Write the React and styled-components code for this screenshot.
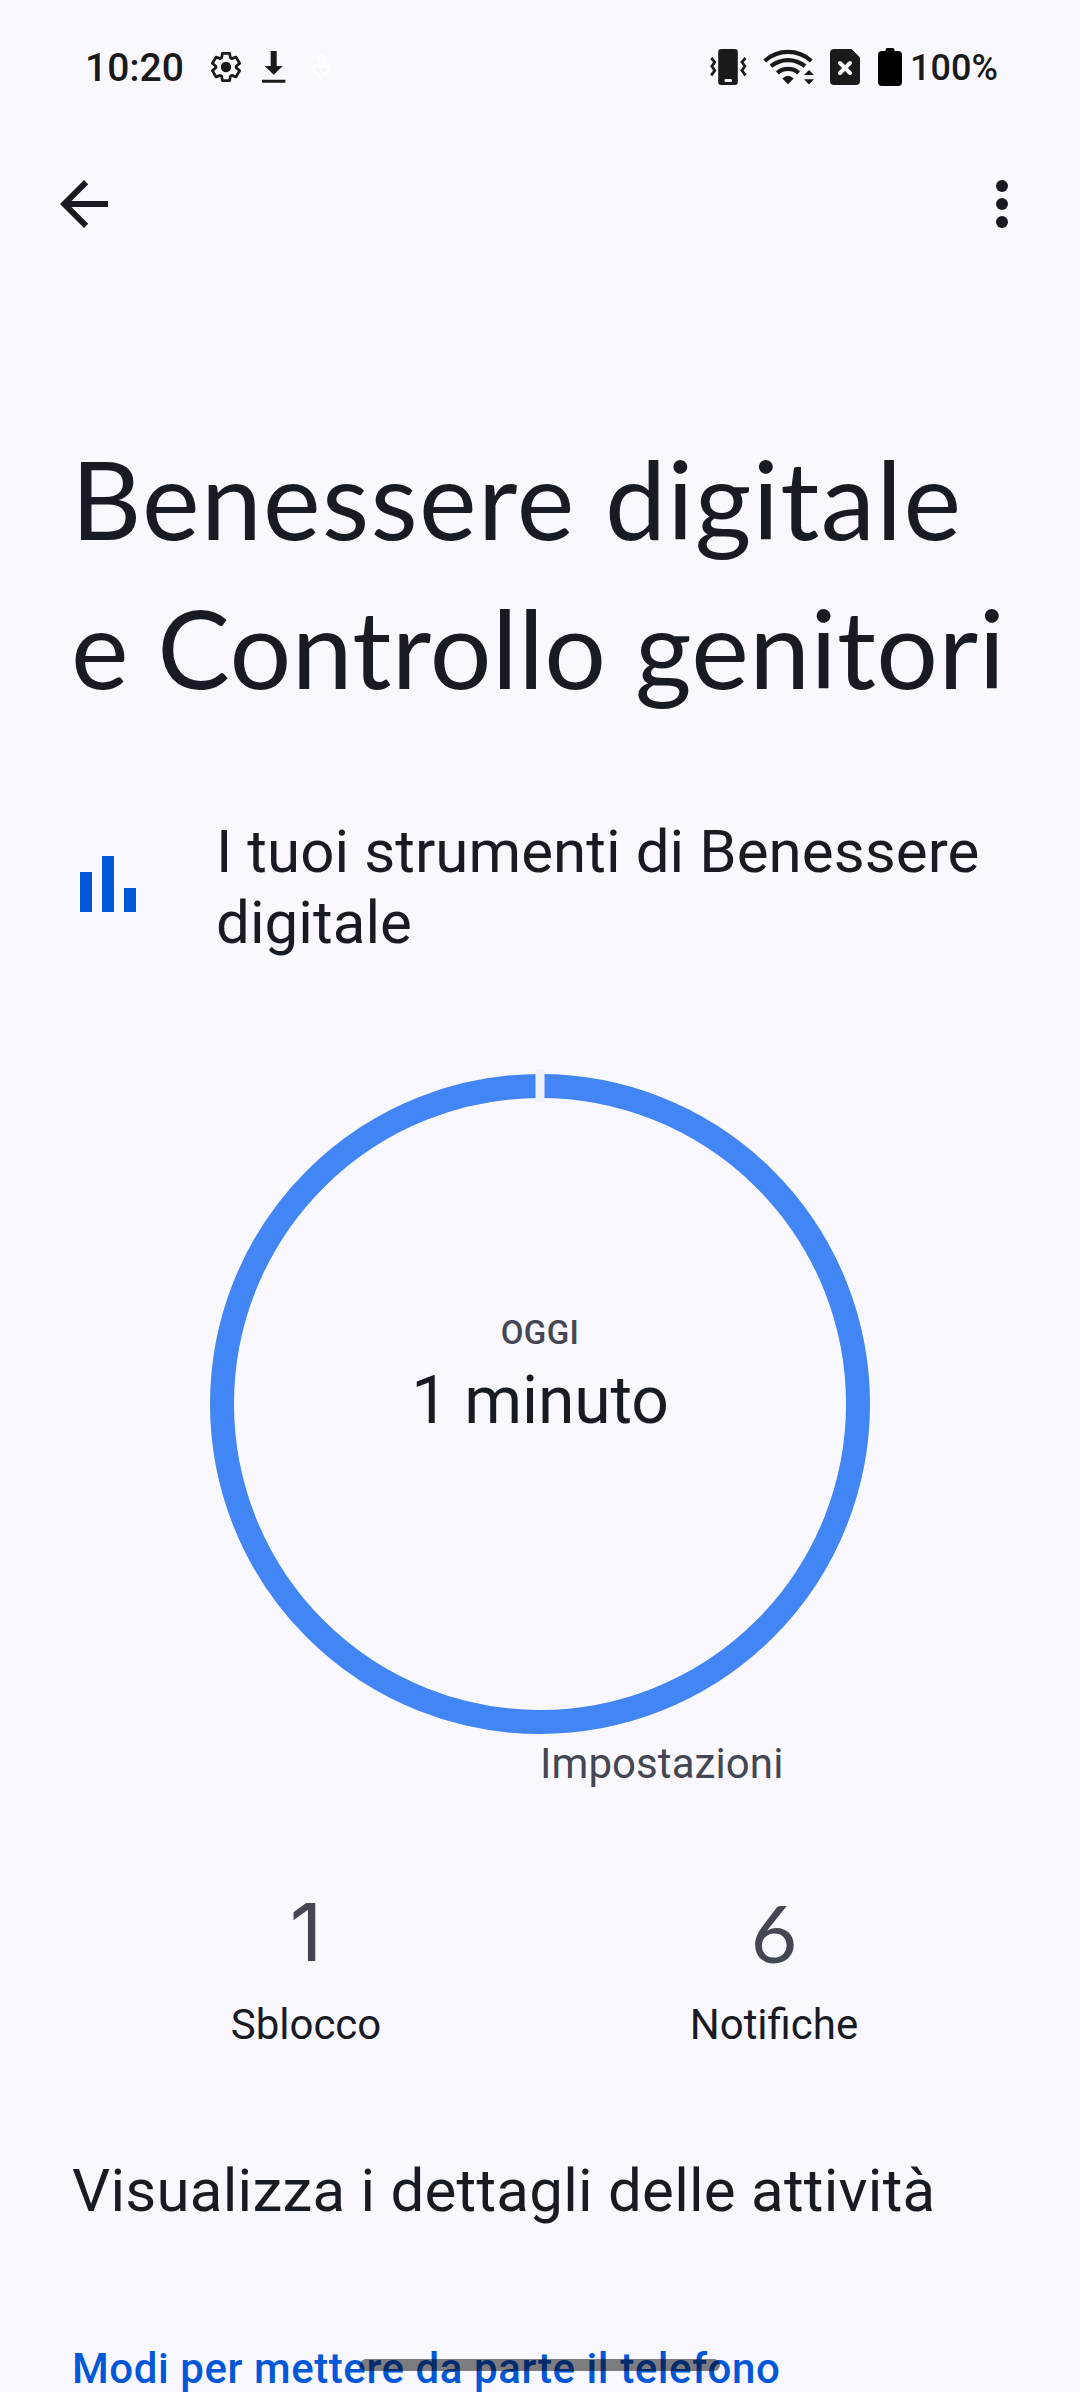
import React from "react";
import styled, { createGlobalStyle } from "styled-components";

const GlobalStyle = createGlobalStyle`
  * {
    box-sizing: border-box;
  }
  body {
    margin: 0;
    background: #faf8ff;
    font-family: Roboto, "Liberation Sans", sans-serif;
    color: #191b24;
  }
`;

const Screen = styled.div`
  position: relative;
  width: 1080px;
  height: 2392px;
  overflow: hidden;
  background: #faf8ff;
`;

const StatusBar = styled.header`
  display: flex;
  align-items: center;
  justify-content: space-between;
  height: 134px;
  padding: 0 82px 0 85px;
  color: #1a1a1a;
`;

const StatusGroup = styled.div`
  display: flex;
  align-items: center;
`;

const StatusIcon = styled.span`
  flex: none;
  margin-left: ${(p) => p.$before}px;

  svg {
    display: block;
  }
`;

const Clock = styled.span`
  width: 101px;
  padding-top: 1px;
  font-size: 39px;
  font-weight: 500;
  line-height: 46px;
`;

const Battery = styled.span`
  margin-left: 8px;
  padding-top: 2px;
  font-size: 36px;
  font-weight: 500;
  line-height: 42px;
`;

const AppBar = styled.nav`
  display: flex;
  align-items: center;
  justify-content: space-between;
  height: 140px;
  padding: 0 42px 0 48px;
`;

const IconButton = styled.button`
  width: 72px;
  height: 72px;
  padding: 0;
  border: 0;
  background: transparent;
  color: inherit;

  svg {
    display: block;
  }
`;

const Title = styled.h1`
  margin: 149px 0 0;
  padding-left: 71px;
  font-family: Lato, "Liberation Sans", sans-serif;
  font-size: 109px;
  font-weight: 400;
  line-height: 149px;
  white-space: nowrap;
`;

const TitleLine = styled.span`
  display: block;
  letter-spacing: ${(p) => p.$spacing}px;
`;

const ToolsRow = styled.section`
  display: flex;
  align-items: flex-start;
  gap: 80px;
  margin-top: 95px;
  padding: 0 72px 0 80px;

  svg {
    flex: none;
    margin-top: 40px;
  }
`;

const ToolsText = styled.h2`
  margin: 0;
  font-size: 60px;
  font-weight: 400;
  line-height: 71px;
  letter-spacing: 0.08px;
`;

const Usage = styled.section`
  position: relative;
  width: 660px;
  height: 660px;
  margin: 116px auto 0;
  padding-top: 239px;
  text-align: center;
`;

const Ring = styled.svg`
  position: absolute;
  inset: 0;
  overflow: visible;
`;

const UsageLabel = styled.div`
  font-size: 33px;
  font-weight: 500;
  line-height: 40px;
  letter-spacing: 0.4px;
  color: #444653;
`;

const UsageValue = styled.div`
  margin-top: 9px;
  font-size: 66px;
  line-height: 78px;
  letter-spacing: -0.15px;
`;

const Legend = styled.div`
  margin: 5px 0 0 540px;
  font-size: 42px;
  line-height: 50px;
  letter-spacing: 0.08px;
  color: #444653;
`;

const Stats = styled.section`
  display: grid;
  grid-template-columns: 1fr 1fr;
  margin-top: 98px;
  padding: 0 72px;
  text-align: center;
`;

const StatValue = styled.div`
  font-family: ${(p) => p.$font}, "Liberation Sans", sans-serif;
  font-size: 80px;
  line-height: 90px;
  color: #444653;
`;

const StatLabel = styled.div`
  margin-top: 23px;
  font-size: 42px;
  line-height: 50px;
`;

const DetailsLink = styled.div`
  margin-top: 105px;
  padding-left: 72px;
  font-size: 60px;
  line-height: 72px;
  letter-spacing: 0.25px;
`;

const Category = styled.div`
  margin-top: 117px;
  padding-left: 72px;
  font-size: 42px;
  font-weight: 500;
  line-height: 50px;
  letter-spacing: 0.58px;
  color: #0057d8;
`;

const HomeIndicator = styled.div`
  position: absolute;
  left: 360px;
  top: 2359px;
  width: 360px;
  height: 12px;
  border-radius: 6px;
  background: rgba(0, 0, 0, 0.5);
`;

// outline of one tooth, repeated every 60 degrees
const tooth = [
  [-4.4, -9.2],
  [-3.6, -13.6],
  [3.6, -13.6],
  [4.4, -9.2],
];
const gearPoints = [0, 60, 120, 180, 240, 300]
  .flatMap((deg) => {
    const a = (deg * Math.PI) / 180;
    return tooth.map(([x, y]) => [
      x * Math.cos(a) - y * Math.sin(a),
      x * Math.sin(a) + y * Math.cos(a),
    ]);
  })
  .map(([x, y]) => `${x.toFixed(2)},${y.toFixed(2)}`)
  .join(" ");

function GearIcon() {
  return (
    <svg width="30" height="30" viewBox="-15 -15 30 30">
      <polygon
        points={gearPoints}
        fill="none"
        stroke="currentColor"
        strokeWidth="2.8"
        strokeLinejoin="round"
      />
      <circle r="5.2" fill="currentColor" />
    </svg>
  );
}

function DownloadIcon() {
  return (
    <svg width="24" height="32" viewBox="0 0 24 32" fill="currentColor">
      <path d="M8.7 0h6v15h6l-9 8.700-9-8.700h6zM0 28.700h23.400v3H0z" />
    </svg>
  );
}

function WellbeingIcon() {
  return (
    <svg
      width="18"
      height="26"
      viewBox="0 0 18 26"
      fill="none"
      stroke="#fff"
      strokeWidth="2.5"
      strokeLinejoin="round"
    >
      <circle cx="9" cy="4.5" r="3.1" />
      <path d="M9 23.500L2.300 17.200C-.6 13.600 4.600 9 9 13.800c4.400-4.800 9.600-.2 6.700 3.400z" />
    </svg>
  );
}

function VibrateIcon() {
  return (
    <svg width="37" height="36" viewBox="0 0 37 36">
      <rect x="8.200" width="19.600" height="36" rx="3" fill="currentColor" />
      <rect x="14.500" y="30" width="7.500" height="3" rx="1.200" fill="#faf8ff" />
      <path
        d="M1.200 9l3.600 4-3 4.200 3 4.200-3.600 5M35.500 9l-3.600 4 3 4.200-3 4.200 3.600 5"
        fill="none"
        stroke="currentColor"
        strokeWidth="2.700"
      />
    </svg>
  );
}

function WifiIcon() {
  return (
    <svg width="51" height="36" viewBox="0 0 51 36">
      <g fill="none" stroke="currentColor" strokeWidth="4.200">
        <path d="M1.700 12a34.500 34.500 0 0 1 46.600 0" />
        <path d="M8 17.200a26.500 26.500 0 0 1 34 0" />
        <path d="M14.300 23.800a16.500 16.500 0 0 1 21.400 0" />
      </g>
      <path
        d="M19.300 29.600Q25 23.900 30.700 29.600L25 35.300zM41 26h10l-5-5zM41 30.200h10l-5 5.200z"
        fill="currentColor"
      />
    </svg>
  );
}

function NoSimIcon() {
  return (
    <svg width="30" height="36" viewBox="0 0 30 36">
      <path
        d="M4 0h17.500L30 8.500V32a4 4 0 0 1-4 4H4a4 4 0 0 1-4-4V4a4 4 0 0 1 4-4z"
        fill="currentColor"
      />
      <path
        d="M10 14l10 10M20 14L10 24"
        stroke="#faf8ff"
        strokeWidth="4"
        strokeLinecap="round"
      />
    </svg>
  );
}

function BatteryIcon() {
  return (
    <svg width="24" height="38" viewBox="0 0 24 38">
      <rect y="3" width="24" height="35" rx="4" />
      <rect x="7.500" width="9" height="6" rx="2" />
    </svg>
  );
}

const stats = [
  { value: "1", label: "Sblocco", font: "Inter" },
  { value: "6", label: "Notifiche", font: "Lato" },
];

export default function App() {
  return (
    <>
      <GlobalStyle />
      <Screen>
        <StatusBar>
          <StatusGroup>
            <Clock>10:20</Clock>
            <StatusIcon $before={25}>
              <GearIcon />
            </StatusIcon>
            <StatusIcon $before={21}>
              <DownloadIcon />
            </StatusIcon>
            <StatusIcon $before={26}>
              <WellbeingIcon />
            </StatusIcon>
          </StatusGroup>
          <StatusGroup>
            <StatusIcon $before={0}>
              <VibrateIcon />
            </StatusIcon>
            <StatusIcon $before={16}>
              <WifiIcon />
            </StatusIcon>
            <StatusIcon $before={16}>
              <NoSimIcon />
            </StatusIcon>
            <StatusIcon $before={18}>
              <BatteryIcon />
            </StatusIcon>
            <Battery>100%</Battery>
          </StatusGroup>
        </StatusBar>

        <AppBar>
          <IconButton aria-label="Indietro">
            <svg width="72" height="72" viewBox="0 0 24 24" fill="currentColor">
              <path d="M20 11H7.830l5.590-5.590L12 4l-8 8 8 8 1.410-1.410L7.830 13H20z" />
            </svg>
          </IconButton>
          <IconButton aria-label="Altre opzioni">
            <svg width="72" height="72" viewBox="0 0 24 24" fill="currentColor">
              <circle cx="12" cy="6" r="2" />
              <circle cx="12" cy="12" r="2" />
              <circle cx="12" cy="18" r="2" />
            </svg>
          </IconButton>
        </AppBar>

        <Title>
          <TitleLine $spacing={1.35}>Benessere digitale</TitleLine>
          <TitleLine $spacing={0.45}>e Controllo genitori</TitleLine>
        </Title>

        <ToolsRow>
          <svg width="56" height="56" viewBox="0 0 56 56" fill="#0057d8">
            <rect y="16" width="12" height="40" />
            <rect x="22" width="12" height="56" />
            <rect x="44" y="32" width="12" height="24" />
          </svg>
          <ToolsText>I tuoi strumenti di Benessere digitale</ToolsText>
        </ToolsRow>

        <Usage>
          <Ring width="660" height="660" viewBox="0 0 660 660">
            <circle
              cx="330"
              cy="330"
              r="318"
              fill="none"
              stroke="#4286f5"
              strokeWidth="24"
            />
            <rect x="325.500" y="-5" width="9" height="33" fill="#eff0fc" />
          </Ring>
          <UsageLabel>OGGI</UsageLabel>
          <UsageValue>1 minuto</UsageValue>
        </Usage>
        <Legend>Impostazioni</Legend>

        <Stats>
          {stats.map((s) => (
            <div key={s.label}>
              <StatValue $font={s.font}>{s.value}</StatValue>
              <StatLabel>{s.label}</StatLabel>
            </div>
          ))}
        </Stats>

        <DetailsLink>Visualizza i dettagli delle attività</DetailsLink>
        <Category>Modi per mettere da parte il telefono</Category>
        <HomeIndicator />
      </Screen>
    </>
  );
}
